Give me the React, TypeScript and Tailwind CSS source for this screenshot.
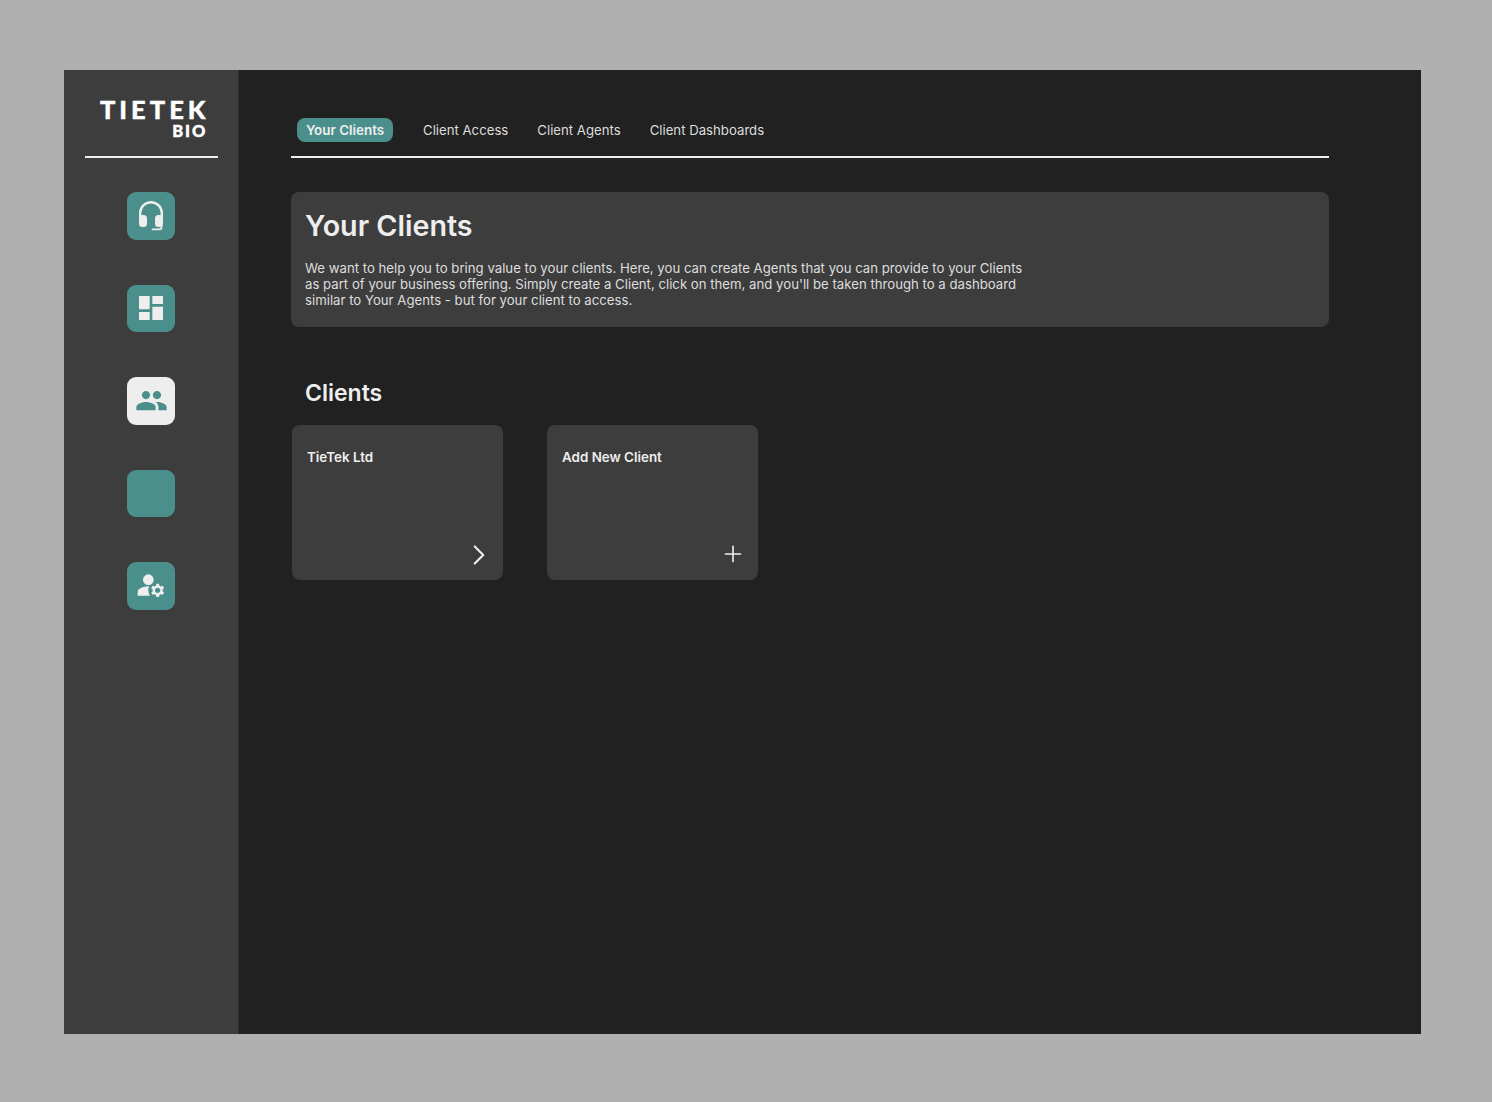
import { ChevronRight, Plus } from "lucide-react";
import { MdDashboard, MdManageAccounts, MdPeople } from "react-icons/md";

function HeadsetIcon() {
  return (
    <svg viewBox="0 0 48 48" className="w-12 h-12" fill="none">
      <path d="M13.200 25v-4a10.800 10.800 0 0 1 21.600 0v4" stroke="#eeeeee" strokeWidth="2.400" />
      <rect x="12" y="23" width="8" height="12" rx="3.500" fill="#eeeeee" />
      <rect x="28" y="23" width="8" height="12" rx="3.500" fill="#eeeeee" />
      <path d="M34.500 34v1.500a1.800 1.800 0 0 1-1.800 1.800H25.500" stroke="#eeeeee" strokeWidth="1.800" strokeLinecap="round" />
    </svg>
  );
}

function NavButton({ active, children }: { active?: boolean; children?: React.ReactNode }) {
  return (
    <div
      className={
        active
          ? "w-12 h-[47.5px] rounded-[9px] bg-[#eeeeee] text-[#4a8f8c] flex items-center justify-center"
          : "w-12 h-[47.5px] rounded-[9px] bg-[#4a8f8c] text-[#eeeeee] flex items-center justify-center"
      }
    >
      {children}
    </div>
  );
}

function ClientCard({ title, children }: { title: string; children: React.ReactNode }) {
  return (
    <div className="w-[211px] h-[155px] rounded-lg bg-[#3d3d3d] pt-[23px] px-[15px] pb-2 flex flex-col justify-between">
      <div className="text-[13.4px] leading-[18px] font-semibold text-[#eeeeee]">{title}</div>
      <div className="flex justify-end">{children}</div>
    </div>
  );
}

export default function App() {
  return (
    <div className="min-h-[1102px] bg-[#b0b0b0] pt-[70px] pl-[64px] font-['Inter',sans-serif]">
      <div className="w-[1357px] h-[964px] bg-[#212121] flex">
        {/* Sidebar */}
        <aside className="w-[175px] bg-[#3d3d3d] border-r border-[#2e2e2e] flex flex-col items-center">
          <div className="w-[133px] h-[88px] border-b-2 border-[#eeeeee] pt-[26px] pr-3 flex flex-col items-end font-['Lato',sans-serif] font-black text-white [-webkit-text-stroke:0.4px_white]">
            <div className="text-[25.5px] leading-[26px] tracking-[4px] mr-[-4px]">TIETEK</div>
            <div className="mt-[2px] text-[16.5px] leading-[14px] tracking-[2px] mr-[-2px]">BIO</div>
          </div>
          <div className="mt-[34px] flex flex-col items-center gap-[45px]">
            <NavButton>
              <HeadsetIcon />
            </NavButton>
            <NavButton>
              <MdDashboard className="w-8 h-8" />
            </NavButton>
            <NavButton active>
              <MdPeople className="w-[33px] h-[33px]" />
            </NavButton>
            <NavButton />
            <NavButton>
              <MdManageAccounts className="w-8 h-8 -ml-[1px] -mt-[1px]" />
            </NavButton>
          </div>
        </aside>

        {/* Main */}
        <main className="pl-[52px] w-[1090px]">
          <div className="w-[1038px] h-[88px] border-b-2 border-[#eeeeee] pt-[48px] pl-[6px] flex items-start text-[13.2px] text-[#dddddd]">
            <div className="h-6 w-[96px] rounded-lg bg-[#4a8f8c] flex items-center justify-center text-[13.4px] font-semibold text-[#eeeeee]">
              Your Clients
            </div>
            <div className="ml-[30px] leading-6">Client Access</div>
            <div className="ml-[29px] leading-6">Client Agents</div>
            <div className="ml-[29px] leading-6">Client Dashboards</div>
          </div>

          <section className="mt-[34px] w-[1038px] h-[135px] rounded-lg bg-[#3d3d3d] pt-[15px] pl-[14px]">
            <h1 className="text-[28.7px] leading-[38px] font-semibold text-[#eeeeee]">Your Clients</h1>
            <p className="mt-[15px] w-[725px] text-[13.2px] leading-4 text-[#dddddd]">
              We want to help you to bring value to your clients. Here, you can create Agents that you can provide to your Clients as part of your business offering. Simply create a Client, click on them, and you'll be taken through to a dashboard similar to Your Agents - but for your client to access.
            </p>
          </section>

          <h2 className="mt-[50px] pl-[14px] text-[23px] leading-8 font-semibold text-[#eeeeee]">Clients</h2>

          <div className="mt-4 pl-px flex gap-11">
            <ClientCard title="TieTek Ltd">
              <ChevronRight className="w-[34px] h-[34px] -mr-[8px] text-[#eeeeee]" strokeWidth={1.500} />
            </ClientCard>
            <ClientCard title="Add New Client">
              <Plus className="w-[26px] h-[26px] mb-[5px] -mr-[3px] text-[#eeeeee]" strokeWidth={1.500} />
            </ClientCard>
          </div>
        </main>
      </div>
    </div>
  );
}
